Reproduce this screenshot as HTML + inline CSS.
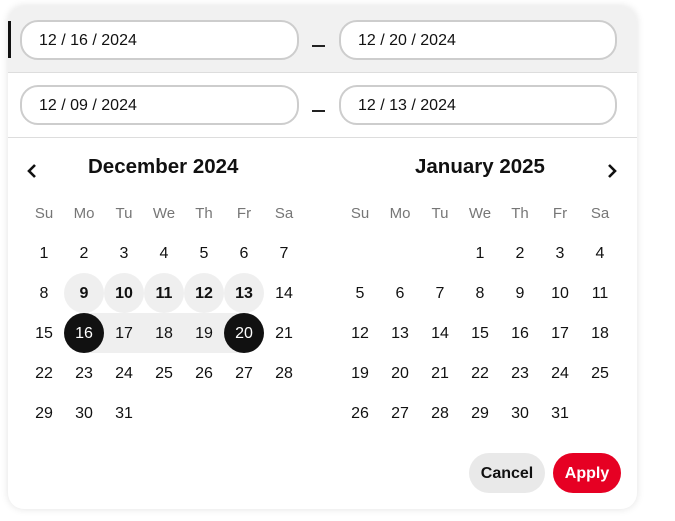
<!DOCTYPE html><html><head><style>
body{margin:0;width:675px;height:521px;background:#fff;font-family:"Liberation Sans",sans-serif;position:relative;overflow:hidden;color:#111}
.card{position:absolute;left:8px;top:6px;width:629px;height:503px;border-radius:16px;background:#fff;box-shadow:0 0 8px rgba(0,0,0,.12);overflow:hidden}
.a{position:absolute}
.inp{position:absolute;height:36px;border:2px solid #cdcdcd;border-radius:18px;background:#fff;font-size:16px;line-height:38px;box-sizing:content-box;padding-left:17px}
.d{position:absolute;width:40px;height:40px;line-height:42px;text-align:center;font-size:16px;border-radius:20px}
.h{color:#767676;font-size:15px}
.b{font-weight:bold}
.g{background:#efefef}
.k{background:#111;color:#fff}
</style></head><body>
<div class="card">
<div class="a" style="left:0;top:0;width:629px;height:66px;background:#f1f1f1;border-bottom:1px solid #ddd"></div>
<div class="a" style="left:0;top:131px;width:629px;height:1px;background:#ddd"></div>
<div class="a" style="left:0;top:15px;width:3px;height:37px;background:#111"></div>
</div>
<div class="inp" style="left:20px;top:20px;width:258px">12 / 16 / 2024</div>
<div class="inp" style="left:339px;top:20px;width:257px">12 / 20 / 2024</div>
<div class="inp" style="left:20px;top:85px;width:258px">12 / 09 / 2024</div>
<div class="inp" style="left:339px;top:85px;width:257px">12 / 13 / 2024</div>
<div class="a" style="left:312px;top:45px;width:13px;height:2px;background:#222"></div>
<div class="a" style="left:312px;top:110px;width:13px;height:2px;background:#222"></div>
<svg class="a" style="left:24px;top:162px" width="16" height="18"><path d="M11 3 L5 9 L11 15" fill="none" stroke="#111" stroke-width="2.6"/></svg>
<svg class="a" style="left:604px;top:162px" width="16" height="18"><path d="M5 3 L11 9 L5 15" fill="none" stroke="#111" stroke-width="2.6"/></svg>
<div class="a b" style="left:88px;top:155px;font-size:20.5px">December 2024</div>
<div class="a b" style="left:415px;top:155px;font-size:20.5px">January 2025</div>
<div class="a" style="left:84px;top:313px;width:160px;height:40px;background:#efefef"></div>
<div class="a" style="left:469px;top:453px;width:76px;height:40px;border-radius:20px;background:#e9e9e9;text-align:center;line-height:41px;font-size:16px;font-weight:bold">Cancel</div>
<div class="a" style="left:553px;top:453px;width:68px;height:40px;border-radius:20px;background:#e60023;color:#fff;text-align:center;line-height:41px;font-size:16px;font-weight:bold">Apply</div>
<div class="d h" style="left:24px;top:193px">Su</div><div class="d h" style="left:64px;top:193px">Mo</div><div class="d h" style="left:104px;top:193px">Tu</div><div class="d h" style="left:144px;top:193px">We</div><div class="d h" style="left:184px;top:193px">Th</div><div class="d h" style="left:224px;top:193px">Fr</div><div class="d h" style="left:264px;top:193px">Sa</div>
<div class="d h" style="left:340px;top:193px">Su</div><div class="d h" style="left:380px;top:193px">Mo</div><div class="d h" style="left:420px;top:193px">Tu</div><div class="d h" style="left:460px;top:193px">We</div><div class="d h" style="left:500px;top:193px">Th</div><div class="d h" style="left:540px;top:193px">Fr</div><div class="d h" style="left:580px;top:193px">Sa</div>
<div class="d" style="left:24px;top:233px">1</div><div class="d" style="left:64px;top:233px">2</div><div class="d" style="left:104px;top:233px">3</div><div class="d" style="left:144px;top:233px">4</div><div class="d" style="left:184px;top:233px">5</div><div class="d" style="left:224px;top:233px">6</div><div class="d" style="left:264px;top:233px">7</div>
<div class="d" style="left:24px;top:273px">8</div><div class="d b g" style="left:64px;top:273px">9</div><div class="d b g" style="left:104px;top:273px">10</div><div class="d b g" style="left:144px;top:273px">11</div><div class="d b g" style="left:184px;top:273px">12</div><div class="d b g" style="left:224px;top:273px">13</div><div class="d" style="left:264px;top:273px">14</div>
<div class="d" style="left:24px;top:313px">15</div><div class="d k" style="left:64px;top:313px">16</div><div class="d" style="left:104px;top:313px">17</div><div class="d" style="left:144px;top:313px">18</div><div class="d" style="left:184px;top:313px">19</div><div class="d k" style="left:224px;top:313px">20</div><div class="d" style="left:264px;top:313px">21</div>
<div class="d" style="left:24px;top:353px">22</div><div class="d" style="left:64px;top:353px">23</div><div class="d" style="left:104px;top:353px">24</div><div class="d" style="left:144px;top:353px">25</div><div class="d" style="left:184px;top:353px">26</div><div class="d" style="left:224px;top:353px">27</div><div class="d" style="left:264px;top:353px">28</div>
<div class="d" style="left:24px;top:393px">29</div><div class="d" style="left:64px;top:393px">30</div><div class="d" style="left:104px;top:393px">31</div>
<div class="d" style="left:460px;top:233px">1</div><div class="d" style="left:500px;top:233px">2</div><div class="d" style="left:540px;top:233px">3</div><div class="d" style="left:580px;top:233px">4</div>
<div class="d" style="left:340px;top:273px">5</div><div class="d" style="left:380px;top:273px">6</div><div class="d" style="left:420px;top:273px">7</div><div class="d" style="left:460px;top:273px">8</div><div class="d" style="left:500px;top:273px">9</div><div class="d" style="left:540px;top:273px">10</div><div class="d" style="left:580px;top:273px">11</div>
<div class="d" style="left:340px;top:313px">12</div><div class="d" style="left:380px;top:313px">13</div><div class="d" style="left:420px;top:313px">14</div><div class="d" style="left:460px;top:313px">15</div><div class="d" style="left:500px;top:313px">16</div><div class="d" style="left:540px;top:313px">17</div><div class="d" style="left:580px;top:313px">18</div>
<div class="d" style="left:340px;top:353px">19</div><div class="d" style="left:380px;top:353px">20</div><div class="d" style="left:420px;top:353px">21</div><div class="d" style="left:460px;top:353px">22</div><div class="d" style="left:500px;top:353px">23</div><div class="d" style="left:540px;top:353px">24</div><div class="d" style="left:580px;top:353px">25</div>
<div class="d" style="left:340px;top:393px">26</div><div class="d" style="left:380px;top:393px">27</div><div class="d" style="left:420px;top:393px">28</div><div class="d" style="left:460px;top:393px">29</div><div class="d" style="left:500px;top:393px">30</div><div class="d" style="left:540px;top:393px">31</div>
</body></html>
